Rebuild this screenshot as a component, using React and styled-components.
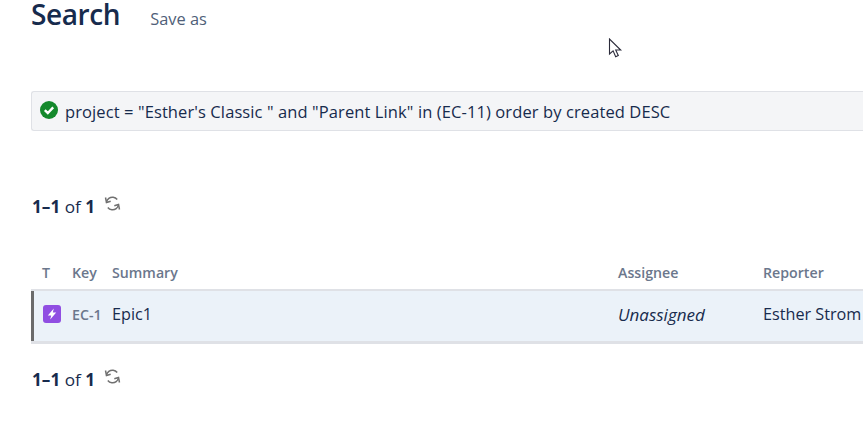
import React from "react";
import styled, { createGlobalStyle } from "styled-components";

const GlobalStyle = createGlobalStyle`
  html, body {
    margin: 0;
    padding: 0;
    background: #fff;
    overflow: hidden;
  }
  body {
    font-family: "Open Sans", "Noto Sans", sans-serif;
    color: #172b4d;
  }
`;

const Page = styled.div`
  position: relative;
  width: 863px;
  height: 435px;
  overflow: hidden;
  padding-left: 31px;
  box-sizing: border-box;
`;

const Header = styled.header`
  display: flex;
  align-items: baseline;
  gap: 30px;
  height: 31px;
`;

const Title = styled.h1`
  margin: 0;
  font-size: 28px;
  line-height: 29px;
  font-weight: 600;
  letter-spacing: -0.4px;
  color: #172b4d;
`;

const SaveAs = styled.button`
  border: 0;
  background: none;
  padding: 0;
  font: inherit;
  font-size: 16.4px;
  line-height: 20px;
  color: #505f79;
`;

const QueryBar = styled.div`
  display: flex;
  align-items: center;
  gap: 7px;
  margin-top: 60px;
  height: 40px;
  width: 850px;
  padding-left: 8px;
  box-sizing: border-box;
  background: #f4f5f7;
  border: 1px solid #dfe1e6;
  border-right: 0;
  border-radius: 3px 0 0 3px;
  font-size: 16.5px;
  letter-spacing: 0.1px;
  color: #172b4d;
  white-space: nowrap;
`;

const Pager = styled.div`
  display: flex;
  align-items: center;
  gap: 9px;
  height: 24px;
  margin-top: ${({ $top }) => $top}px;
  padding-left: 1px;
  font-size: 17.2px;
  color: #172b4d;

  b {
    font-weight: 700;
  }
`;

const Table = styled.div`
  margin-top: 38px;
  width: 832px;
`;

const Row = styled.div`
  display: grid;
  grid-template-columns: 41px 40px 506px 145px 100px;
  align-items: center;
  white-space: nowrap;
`;

const HeadRow = styled(Row)`
  height: 33px;
  border-bottom: 2px solid #dfe1e6;
  font-size: 14.2px;
  font-weight: 600;
  color: #6b778c;
`;

const BodyRow = styled(Row)`
  height: 46px;
  padding-bottom: 4px;
  background: #ebf2f9;
  border-bottom: 3px solid #dfe1e6;
  box-shadow: inset 3px 0 0 #6b6b6b;
  font-size: 16.2px;
  color: #172b4d;
`;

const Cell = styled.div`
  padding-left: ${({ $pad }) => $pad || 0}px;
  font-style: ${({ $italic }) => ($italic ? "italic" : "normal")};
  font-size: ${({ $italic }) => ($italic ? "17px" : "inherit")};
`;

const IssueKey = styled.span`
  font-size: 14.2px;
  font-weight: 600;
  color: #6b778c;
`;

const TypeIcon = styled.svg`
  display: block;
  width: 18px;
  height: 18px;
`;

const Check = styled.svg`
  width: 18px;
  height: 18px;
  margin-top: -3px;
`;

const Refresh = styled.svg`
  width: 17px;
  height: 17px;
  margin-top: -6px;
`;

const Cursor = styled.svg`
  position: absolute;
  left: 608px;
  top: 38px;
  width: 15px;
  height: 21px;
`;

const CheckIcon = () => (
  <Check viewBox="0 0 18 18">
    <circle cx="9" cy="9" r="9" fill="#14892c" />
    <path d="M4.8 9.2l3 2.8 5.4-5.6" fill="none" stroke="#fff" strokeWidth="2.4" />
  </Check>
);

const RefreshIcon = () => (
  <Refresh viewBox="0 0 17 17" fill="none" stroke="#707070" strokeWidth="1.5">
    <path d="M2.5 7.5C3 4 6 1.8 9.2 2.2c1.6.2 3 1 4 2.3" />
    <path d="M1.5 2.5l1 5 4.2-1.2" />
    <path d="M14.5 9.5c-.5 3.5-3.5 5.7-6.7 5.3-1.6-.2-3-1-4-2.3" />
    <path d="M15.5 14.5l-1-5-4.2 1.2" />
  </Refresh>
);

export default function App() {
  return (
    <Page>
      <GlobalStyle />
      <Header>
        <Title>Search</Title>
        <SaveAs>Save as</SaveAs>
      </Header>
      <QueryBar>
        <CheckIcon />
        project = "Esther's Classic " and "Parent Link" in (EC-11) order by created DESC
      </QueryBar>
      <Pager $top={63}>
        <span>
          <b>1–1</b> of <b>1</b>
        </span>
        <RefreshIcon />
      </Pager>
      <Table>
        <HeadRow>
          <Cell $pad={11}>T</Cell>
          <Cell>Key</Cell>
          <Cell>Summary</Cell>
          <Cell>Assignee</Cell>
          <Cell>Reporter</Cell>
        </HeadRow>
        <BodyRow>
          <Cell $pad={12}>
            <TypeIcon viewBox="0 0 18 18">
              <rect width="18" height="18" rx="3" fill="#904ee2" />
              <path d="M10.8 3.6L4.8 10.4H8.2L7.2 14.4 13.2 7.6H9.8z" fill="#fff" />
            </TypeIcon>
          </Cell>
          <Cell>
            <IssueKey>EC-1</IssueKey>
          </Cell>
          <Cell>Epic1</Cell>
          <Cell $italic>Unassigned</Cell>
          <Cell>Esther Strom</Cell>
        </BodyRow>
      </Table>
      <Pager $top={23}>
        <span>
          <b>1–1</b> of <b>1</b>
        </span>
        <RefreshIcon />
      </Pager>
      <Cursor viewBox="0 0 15 21">
        <path
          d="M1.5 1v15l3.6-3.2 2.6 6 2.6-1.2-2.6-5.6h5z"
          fill="#fff"
          stroke="#2b2b3a"
          strokeWidth="1.1"
        />
      </Cursor>
    </Page>
  );
}
